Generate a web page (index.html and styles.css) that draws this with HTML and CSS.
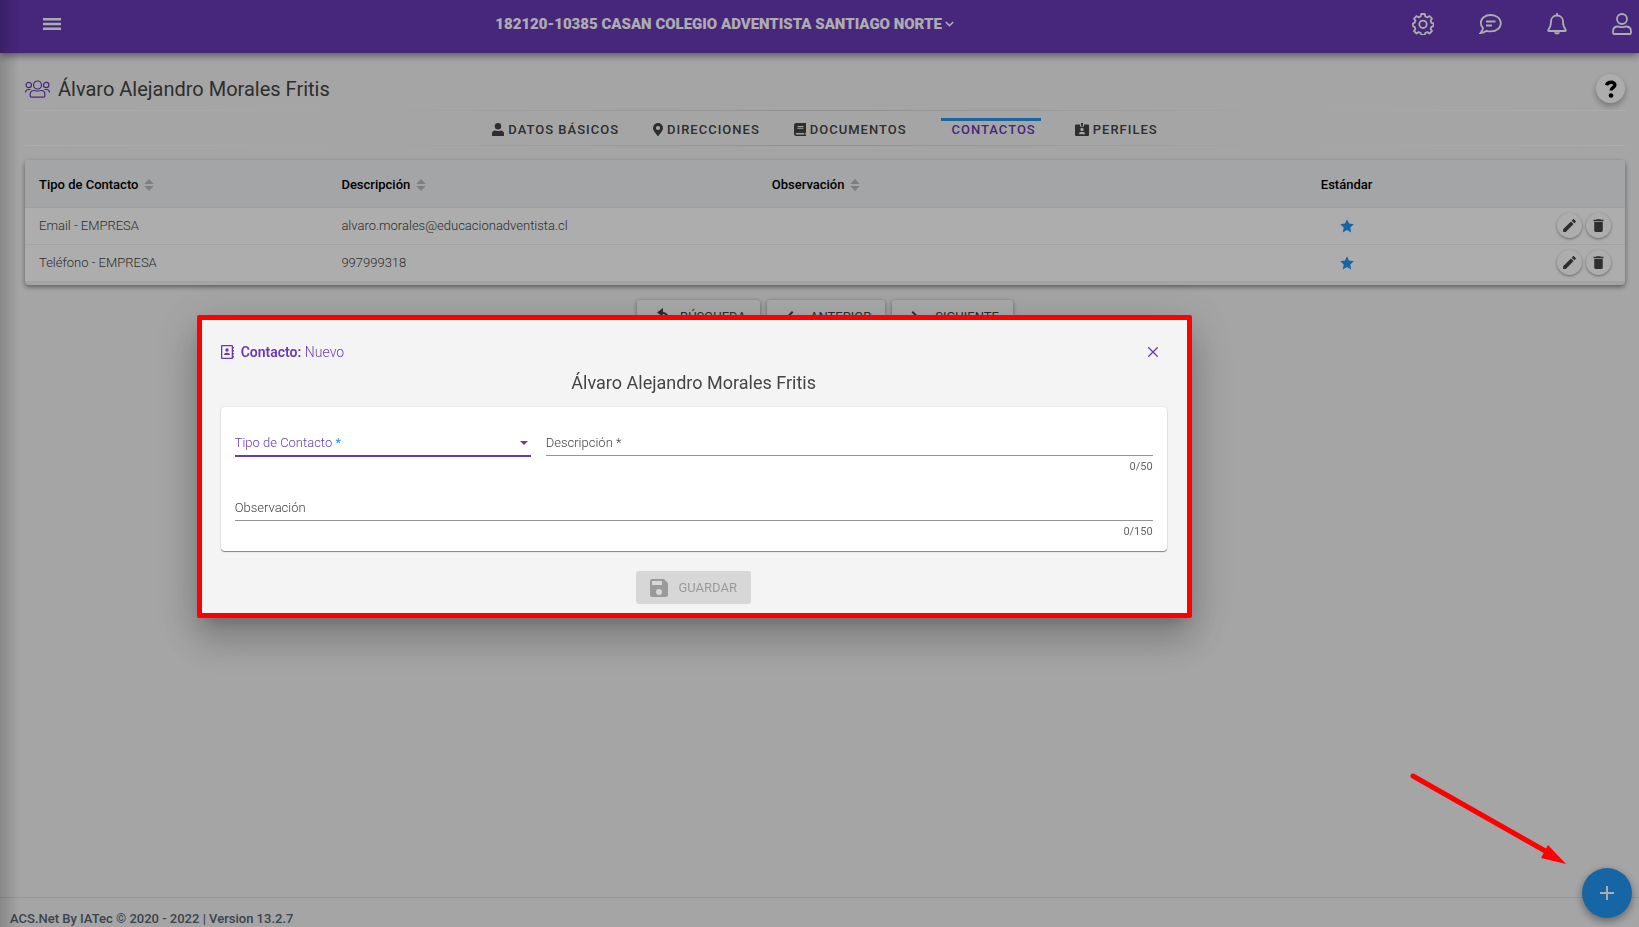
FILE: index.html
```html
<!DOCTYPE html>
<html lang="es">
<head>
<meta charset="utf-8">
<meta name="viewport" content="width=device-width, initial-scale=1">
<title>ACS.Net - Contactos</title>
<link rel="stylesheet" href="styles.css">
</head>
<body>
<header class="topbar">
  <button class="menu-button" aria-label="Menú">
    <svg width="18" height="12" viewBox="0 0 18 12"><path d="M0 0h18v2.6H0zM0 4.8h18v2.4H0zM0 9.4h18V12H0z" fill="currentColor"/></svg>
  </button>
  <button class="entity">
    <span>182120-10385 CASAN COLEGIO ADVENTISTA SANTIAGO NORTE</span>
    <svg width="9" height="6" viewBox="0 0 9 6" class="line"><path d="M.8 1l3.7 3.6L8.2 1" stroke-width="1.6"/></svg>
  </button>
  <nav class="topbar-actions">
    <button aria-label="Configuración"><svg width="22" height="22" viewBox="0 0 22 22" class="line"><path stroke-width="1.8" stroke-linejoin="round" d="M9.200 1h3.600l.5 2.500 2 .9 2.200-1.300 2.500 2.500-1.400 2.200.8 2 2.100.5v2.900l-2.100.6-.8 2 1.400 2.200-2.500 2.500-2.200-1.400-2 .9-.5 2H9.200l-.5-2-2-.9-2.200 1.400L2 18l1.400-2.200-.8-2L1 13.200v-2.900l1.600-.5.8-2L2 5.600l2.500-2.500 2.200 1.300 2-.9z"/><circle cx="11" cy="11.300" r="3.700" stroke-width="1.800"/></svg></button>
    <button aria-label="Mensajes"><svg width="23" height="20" viewBox="0 0 23 20" class="line"><path stroke-width="1.800" d="M11.800 1C6 1 1.800 4.300 1.800 9c0 2 .8 3.700 2.200 5.100-.2 1.800-1.200 3.500-2.500 4.900 2.600 0 4.500-.9 6-2.200 1.300.4 2.700.6 4.300.6 5.800 0 10-3.600 10-8.200S17.600 1 11.800 1z"/><path d="M7 7.500h9.500M7 11.500h6" stroke-width="1.800"/></svg></button>
    <button aria-label="Notificaciones"><svg width="20" height="22" viewBox="0 0 20 22" class="line"><path stroke-width="1.800" d="M10 0v2.500M10 2.500c-3.700 0-6 2.700-6 6 0 4.500-1 6.300-2.600 8.200-.4.600-.2 1.300.6 1.300h16c.8 0 1-.7.600-1.300C17 14.800 16 13 16 8.500c0-3.300-2.300-6-6-6z"/><path d="M7 19.200c.8 3 5.200 3 6 0z" fill="currentColor" stroke="none"/></svg></button>
    <button aria-label="Usuario"><svg width="20" height="22" viewBox="0 0 20 22" class="line"><circle cx="10" cy="6" r="5" stroke-width="1.800"/><path stroke-width="1.800" d="M6 13.500c1.500 0 2.200.7 4 .7s2.500-.7 4-.7c3 0 5 2 5 5v1.200c0 .8-.6 1.300-1.300 1.300H2.300C1.600 21 1 20.500 1 19.700v-1.200c0-3 2-5 5-5z"/></svg></button>
  </nav>
</header>

<main class="page">
  <div class="page-head">
    <svg width="25" height="18" viewBox="0 0 25 18" class="line people"><circle cx="12.500" cy="5" r="4"/><circle cx="3.800" cy="5" r="2.700"/><circle cx="21.200" cy="5" r="2.700"/><path d="M9 10.500c1.400 0 1.700.5 3.500.5s2.100-.5 3.500-.5c2.300 0 3.800 1.500 3.800 3.600v2c0 .7-.4 1.100-1.100 1.100H6.300c-.7 0-1.100-.4-1.100-1.100v-2c0-2.100 1.500-3.600 3.800-3.600zM.5 12.500C.6 10.500 1.700 9.500 3.500 9.500h2M24.500 12.500c-.1-2-1.200-3-3-3h-2"/></svg>
    <h1>Álvaro Alejandro Morales Fritis</h1>
    <button class="help" aria-label="Ayuda"><svg width="12" height="18" viewBox="0 0 12 18"><path d="M1.500 5.200C2.100 3.200 3.600 2.200 6 2.200c2.500 0 3.900 1.200 3.900 2.900 0 2.600-3.800 2.700-3.800 5.500" fill="none" stroke="#000" stroke-width="3.400"/><circle cx="6" cy="15.500" r="2.300"/></svg></button>
  </div>

  <nav class="tabs">
    <a href="#"><svg width="12" height="13" viewBox="0 0 12 13"><circle cx="6" cy="3.300" r="3.200"/><path d="M0 13v-2.500C0 8.300 1.500 7.400 3.500 7.400c1.500.7 3.500.7 5 0 2 0 3.500.9 3.500 3.100V13z"/></svg>DATOS BÁSICOS</a>
    <a href="#"><svg width="10" height="13" viewBox="0 0 10 13"><path fill-rule="evenodd" d="M5 0a5 5 0 0 0-5 5c0 2 .8 2.800 4.400 7.700.3.400.9.400 1.200 0C9.200 7.800 10 7 10 5a5 5 0 0 0-5-5zm0 2.900a2.100 2.100 0 1 1 0 4.200 2.100 2.100 0 0 1 0-4.200z"/></svg>DIRECCIONES</a>
    <a href="#"><svg width="12" height="13" viewBox="0 0 12 13"><path fill-rule="evenodd" d="M2.500 0H12v9.500l-.6.6v1.400l.6.500v1H2.500A2.500 2.500 0 0 1 0 10.500v-8A2.500 2.500 0 0 1 2.500 0zM3.500 3v.9h6V3zm0 1.800v.9h6v-.9zM2.500 9.900c-1 0-1 1.600 0 1.600h7.700V9.900z"/></svg>DOCUMENTOS</a>
    <a href="#" class="active" aria-current="page">CONTACTOS</a>
    <a href="#"><svg width="14" height="13" viewBox="0 0 14 13"><path fill-rule="evenodd" d="M1 1.500h4v2h4v-2h4a1 1 0 0 1 1 1V12a1 1 0 0 1-1 1H1a1 1 0 0 1-1-1V2.500a1 1 0 0 1 1-1zm6 3.300a1.700 1.700 0 1 0 0 3.400 1.700 1.700 0 0 0 0-3.400zM4 11.300h6c0-1.700-.8-2.300-2-2.300H6c-1.200 0-2 .6-2 2.300zM6 0h2v2.700H6z"/></svg>PERFILES</a>
  </nav>

  <div class="table-card">
    <table>
      <colgroup><col class="c-type"><col class="c-desc"><col class="c-obs"><col class="c-std"><col></colgroup>
      <thead>
        <tr>
          <th>Tipo de Contacto<svg class="sort" width="10" height="12" viewBox="0 0 10 12"><path d="M5 0l4.700 5H.3zM5 12L.3 7h9.400z"/></svg></th>
          <th>Descripción<svg class="sort" width="10" height="12" viewBox="0 0 10 12"><path d="M5 0l4.700 5H.3zM5 12L.3 7h9.400z"/></svg></th>
          <th>Observación<svg class="sort" width="10" height="12" viewBox="0 0 10 12"><path d="M5 0l4.700 5H.3zM5 12L.3 7h9.400z"/></svg></th>
          <th class="center">Estándar</th>
          <th></th>
        </tr>
      </thead>
      <tbody>
        <tr>
          <td>Email - EMPRESA</td><td>alvaro.morales@educacionadventista.cl</td><td></td>
          <td class="center"><svg class="star" width="14" height="14" viewBox="0 0 14 14"><path d="M7 .3l2 4.300 4.800.6-3.500 3.300.9 4.900L7 11l-4.200 2.400.9-4.900L.2 5.200 5 4.600z"/></svg></td>
          <td><div class="row-actions">
            <button aria-label="Editar"><svg width="17" height="17" viewBox="0 0 24 24"><path d="M3 17.250V21h3.750L17.810 9.940l-3.750-3.750L3 17.250zM20.710 7.040a1 1 0 0 0 0-1.410l-2.340-2.340a1 1 0 0 0-1.410 0l-1.830 1.830 3.750 3.750 1.830-1.830z"/></svg></button>
            <button aria-label="Eliminar"><svg width="17" height="17" viewBox="0 0 24 24"><path d="M6 19c0 1.100.9 2 2 2h8c1.100 0 2-.9 2-2V7H6v12zM19 4h-3.500l-1-1h-5l-1 1H5v2h14V4z"/></svg></button>
          </div></td>
        </tr>
        <tr>
          <td>Teléfono - EMPRESA</td><td>997999318</td><td></td>
          <td class="center"><svg class="star" width="14" height="14" viewBox="0 0 14 14"><path d="M7 .3l2 4.300 4.800.6-3.500 3.300.9 4.900L7 11l-4.200 2.400.9-4.900L.2 5.200 5 4.600z"/></svg></td>
          <td><div class="row-actions">
            <button aria-label="Editar"><svg width="17" height="17" viewBox="0 0 24 24"><path d="M3 17.250V21h3.750L17.810 9.940l-3.750-3.750L3 17.250zM20.710 7.040a1 1 0 0 0 0-1.410l-2.340-2.340a1 1 0 0 0-1.410 0l-1.830 1.830 3.750 3.750 1.830-1.830z"/></svg></button>
            <button aria-label="Eliminar"><svg width="17" height="17" viewBox="0 0 24 24"><path d="M6 19c0 1.100.9 2 2 2h8c1.100 0 2-.9 2-2V7H6v12zM19 4h-3.500l-1-1h-5l-1 1H5v2h14V4z"/></svg></button>
          </div></td>
        </tr>
      </tbody>
    </table>
  </div>

  <div class="pager">
    <button class="btn"><svg width="24" height="24" viewBox="0 0 24 24"><path d="M15 3L9 7.500 15 12z"/><path d="M13 7.500c5 0 7.500 3 7.500 9" fill="none" stroke="currentColor" stroke-width="2"/></svg>BÚSQUEDA</button>
    <button class="btn"><svg width="24" height="24" viewBox="0 0 24 24"><path d="M15.410 7.410L14 6l-6 6 6 6 1.410-1.410L10.830 12z"/></svg>ANTERIOR</button>
    <button class="btn"><svg width="24" height="24" viewBox="0 0 24 24"><path d="M10 6L8.590 7.410 13.170 12l-4.580 4.590L10 18l6-6z"/></svg>SIGUIENTE</button>
  </div>
</main>

<footer class="footer">ACS.Net By IATec © 2020 - 2022 | Version 13.2.7</footer>
<button class="fab" aria-label="Agregar"><svg width="14" height="14" viewBox="0 0 14 14"><path d="M7 0v14M0 7h14" stroke="currentColor" stroke-width="2"/></svg></button>
<div class="side-shadow"></div>
<div class="backdrop"></div>

<section class="dialog" role="dialog" aria-labelledby="dialog-title">
  <div class="dialog-head">
    <svg width="14" height="14" viewBox="0 0 14 14" class="book"><path fill-rule="evenodd" d="M0 1a1 1 0 0 1 1-1h10a1 1 0 0 1 1 1v1h1v1.500h-1V5h1v1.500h-1V8h1v1.500h-1V11h1v1.500h-1V13a1 1 0 0 1-1 1H1a1 1 0 0 1-1-1zm1.300.3v11.400h9.400V1.300z"/><circle cx="6" cy="5" r="1.700"/><path d="M3 10c0-3 6-3 6 0z"/></svg>
    <h2 id="dialog-title">Contacto: <span>Nuevo</span></h2>
    <button class="close" aria-label="Cerrar"><svg width="10" height="10" viewBox="0 0 10 10" class="line"><path d="M.3.3l9.400 9.400M9.700.3L.3 9.700" stroke-width="1.300"/></svg></button>
  </div>
  <h3>Álvaro Alejandro Morales Fritis</h3>
  <form id="contact" class="form-card">
    <div class="field focused">
      <label for="tipo">Tipo de Contacto <b>*</b></label>
      <select id="tipo"><option value=""></option></select>
      <svg class="caret" width="8" height="4" viewBox="0 0 8 4"><path d="M0 0h8L4 4z"/></svg>
    </div>
    <div class="field">
      <label for="desc">Descripción *</label>
      <input id="desc" type="text" maxlength="50">
      <span class="hint">0/50</span>
    </div>
    <div class="field wide">
      <label for="obs">Observación</label>
      <input id="obs" type="text" maxlength="150">
      <span class="hint">0/150</span>
    </div>
  </form>
  <button class="btn save" form="contact" disabled><svg width="24" height="24" viewBox="0 0 24 24"><path d="M17 3H5a2 2 0 0 0-2 2v14a2 2 0 0 0 2 2h14c1.100 0 2-.9 2-2V7l-4-4zm-5 16a3 3 0 1 1 0-6 3 3 0 0 1 0 6zm3-10H5V5h10v4z"/></svg>GUARDAR</button>
</section>

<svg class="arrow" width="156" height="92" viewBox="0 0 156 92"><path d="M3 3l134 76" stroke="#f00" stroke-width="5" stroke-linecap="round"/><path d="M138 72l18 19-25-6z" fill="#f00"/></svg>
</body>
</html>
```
FILE: styles.css
```css
* { box-sizing: border-box; }

body {
  margin: 0;
  min-height: 100vh;
  display: flex;
  flex-direction: column;
  background: #f4f4f4;
  color: #444;
  font: 13px/20px Roboto, sans-serif;
}

button, input, select { font: inherit; color: inherit; }
button { border: 0; padding: 0; background: none; cursor: pointer; }
svg { display: block; flex: none; fill: currentColor; }
.line { fill: none; stroke: currentColor; }

.topbar {
  position: relative;
  height: 53px;
  padding: 0 7px 6px 43px;
  display: flex;
  align-items: center;
  background: #673ab7;
  color: #fff;
  box-shadow: 0 2px 8px rgba(0, 0, 0, .5);
}
.entity {
  display: flex;
  align-items: center;
  gap: 3px;
  margin: 0 auto 0 26.5vw;
  font-size: 15px;
  font-weight: 900;
}
.topbar-actions { display: flex; align-items: center; gap: 45px; }

.page { flex: 1; padding: 21px 14px 0 25px; }
.page-head { display: flex; align-items: center; height: 29px; margin-bottom: 7px; }
.page-head .people { color: #673ab7; stroke-width: 1.2; }
h1 { margin: 0 0 0 8px; font-size: 20px; line-height: 28px; font-weight: 400; color: #444; }
.help {
  width: 29px;
  height: 29px;
  margin-left: auto;
  display: grid;
  place-items: center;
  border-radius: 50%;
  background: #fff;
  color: #000;
  box-shadow: 0 3px 6px rgba(0, 0, 0, .3);
}

.tabs {
  display: flex;
  justify-content: center;
  gap: 34px;
  height: 36px;
  padding-top: 8px;
  margin-bottom: 14px;
  background:
    linear-gradient(90deg, #fff, #f4f4f4 20%, #d0d6da 50%, #f4f4f4 80%, #fff) top / 100% 1px no-repeat,
    linear-gradient(90deg, #fff, #f4f4f4 20%, #d0d6da 50%, #f4f4f4 80%, #fff) bottom / 100% 1px no-repeat;
}
.tabs a {
  display: flex;
  align-items: center;
  gap: 4px;
  height: 23px;
  color: #444;
  font-weight: 500;
  letter-spacing: 1px;
  text-decoration: none;
}
.tabs .active { padding: 0 5px 0 11px; border-top: 3px solid #2196f3; height: 20px; color: #673ab7; }

.table-card {
  padding-bottom: 3px;
  border-radius: 4px;
  overflow: hidden;
  background: #f1f2f5;
  box-shadow: 0 2px 5px rgba(0, 0, 0, .45);
}
table { width: 100%; table-layout: fixed; border-collapse: separate; border-spacing: 0; }
.c-type { width: 18.9%; }
.c-desc { width: 26.9%; }
.c-obs { width: 28.8%; }
.c-std { width: 16%; }
th {
  height: 48px;
  padding: 2px 14px 0;
  background: #f1f3f5;
  border-bottom: 1px solid #e8eaf6;
  color: #000;
  font-weight: 500;
  text-align: left;
}
td {
  height: 37px;
  padding: 0 14px 1px;
  background: #fff;
  border-bottom: 1px solid #eeeef8;
  color: #444;
  font-weight: 300;
}
.sort { display: inline-block; vertical-align: -2px; margin-left: 6px; color: #bbb; }
.center { text-align: center; }
.star { margin: auto; color: #2196f3; }
.row-actions { display: flex; justify-content: flex-end; gap: 4px; }
.row-actions button {
  width: 25px;
  height: 25px;
  display: grid;
  place-items: center;
  border-radius: 50%;
  background: #fff;
  box-shadow: 0 1px 3px rgba(0, 0, 0, .4);
}

.pager { display: flex; justify-content: center; gap: 7px; margin-top: 15px; }
.btn {
  display: flex;
  align-items: center;
  gap: 8px;
  height: 33px;
  padding: 0 14px 0 11px;
  border-radius: 3px;
  background: #fafafa;
  box-shadow: 0 1px 4px rgba(0, 0, 0, .4);
}

.footer {
  height: 30px;
  padding: 11px 10px 0;
  border-top: 1px solid #dcdce6;
  line-height: 20px;
  font-weight: 500;
  color: #546570;
}

.fab {
  position: fixed;
  right: 7px;
  bottom: 9px;
  width: 50px;
  height: 50px;
  display: grid;
  place-items: center;
  border-radius: 50%;
  background: #2196f3;
  color: #fff;
  box-shadow: 0 3px 8px rgba(0, 0, 0, .4);
}

.side-shadow {
  position: fixed;
  inset: 0 auto 0 0;
  width: 20px;
  background: linear-gradient(90deg, rgba(0, 0, 0, .18), transparent);
}
.backdrop { position: fixed; inset: 0; background: rgba(0, 0, 0, .32); }

.dialog {
  position: fixed;
  top: 315px;
  left: 12vw;
  width: 995px;
  max-width: 88vw;
  padding: 21px 20px 9px 19px;
  border: 5px solid #f00;
  border-radius: 2px;
  background: #f4f4f4;
  box-shadow: 0 11px 15px -7px rgba(0, 0, 0, .2), 0 24px 38px 3px rgba(0, 0, 0, .14), 0 9px 46px 8px rgba(0, 0, 0, .12);
}
.dialog-head { display: flex; align-items: center; height: 22px; color: #673ab7; }
h2 { margin: 0 auto 0 6px; font-size: 14px; line-height: 22px; font-weight: 600; }
h2 span { font-weight: 300; }
.close { padding: 6px 9px; }
h3 { margin: 7px 0 12px; font-size: 18px; line-height: 25px; font-weight: 400; text-align: center; color: #444; }

.form-card {
  display: grid;
  grid-template-columns: 296px 1fr;
  gap: 16px 15px;
  padding: 18px 14px 12px;
  border-radius: 4px;
  background: #fff;
  box-shadow: 0 1px 1px rgba(0, 0, 0, .45), 0 0 2px rgba(0, 0, 0, .12);
}
.field {
  display: grid;
  grid-template-columns: 1fr auto;
  grid-template-rows: 32px 17px;
  align-items: start;
  color: #666;
}
.field.wide { grid-column: 1 / -1; }
.field label { grid-area: 1 / 1; padding-top: 8px; font-weight: 300; color: #444; pointer-events: none; }
.field.focused label { color: #673ab7; }
.field input, .field select {
  grid-area: 1 / 1 / 2 / 3;
  width: 100%;
  height: 31px;
  padding: 5px 0 0;
  border: 0;
  border-bottom: 1px solid #949494;
  border-radius: 0;
  outline: 0;
  background: none;
  appearance: none;
}
.field.focused { color: #673ab7; }
.field.focused select { height: 32px; border-bottom: 2px solid #673ab7; }
.field b { font-weight: 400; color: #2196f3; }
.caret { grid-area: 1 / 2; margin: 16px 3px 0 0; }
.hint { grid-area: 2 / 1 / 3 / 3; font-size: 11px; line-height: 17px; padding-top: 1px; text-align: right; }

.save { margin: 20px auto 0; gap: 7px; background: #d7d7d7; color: #9a9a9a; box-shadow: none; }

.arrow { position: fixed; right: 73px; bottom: 62px; }
```
